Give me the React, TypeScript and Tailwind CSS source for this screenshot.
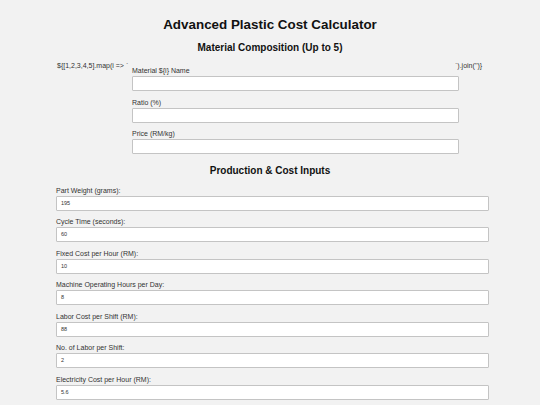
import React from "react";

const font = { fontFamily: '"Liberation Sans", Arial, sans-serif' };

function Field({ label, value, w }: { label: string; value?: string; w: string }) {
  return (
    <div className="mb-[7.5px]">
      <div className="text-[7px] leading-[8px] text-[#333] mb-[1px]">{label}</div>
      <div
        className={`${w} h-[15px] bg-white border border-[#c4c4c4] rounded-[1px] flex items-center pl-[4px] text-[5.5px] text-[#333]`}
      >
        {value}
      </div>
    </div>
  );
}

export default function App() {
  const prod: [string, string][] = [
    ["Part Weight (grams):", "195"],
    ["Cycle Time (seconds):", "60"],
    ["Fixed Cost per Hour (RM):", "10"],
    ["Machine Operating Hours per Day:", "8"],
    ["Labor Cost per Shift (RM):", "88"],
    ["No. of Labor per Shift:", "2"],
    ["Electricity Cost per Hour (RM):", "5.6"],
  ];
  return (
    <div className="w-[540px] h-[405px] bg-[#f2f2f2] overflow-hidden text-[#111]" style={font}>
      <div className="pt-[16px] text-center font-bold text-[13.4px] leading-[18px]">
        Advanced Plastic Cost Calculator
      </div>
      <div className="mt-[7px] text-center font-bold text-[10px] leading-[14px]">
        Material Composition (Up to 5)
      </div>
      <div className="mt-[7px] ml-[57px] flex">
        <div className="w-[75px] text-[7px] leading-[8px] text-[#333] whitespace-nowrap">
          {"${[1,2,3,4,5].map(i => `"}
        </div>
        <div className="w-[327px] mt-[5px] shrink-0">
          <Field label="Material ${i} Name" w="w-[327px]" />
          <Field label="Ratio (%)" w="w-[327px]" />
          <Field label="Price (RM/kg)" w="w-[327px]" />
        </div>
        <div className="ml-[-4px] text-[7px] leading-[8px] text-[#333] whitespace-nowrap">
          {"`).join('')}"}
        </div>
      </div>
      <div className="mt-[2.5px] text-center font-bold text-[10px] leading-[14px]">
        Production &amp; Cost Inputs
      </div>
      <div className="mt-[8.5px] ml-[56px] w-[433px]">
        {prod.map(([l, v]) => (
          <Field key={l} label={l} value={v} w="w-[433px]" />
        ))}
      </div>
    </div>
  );
}
